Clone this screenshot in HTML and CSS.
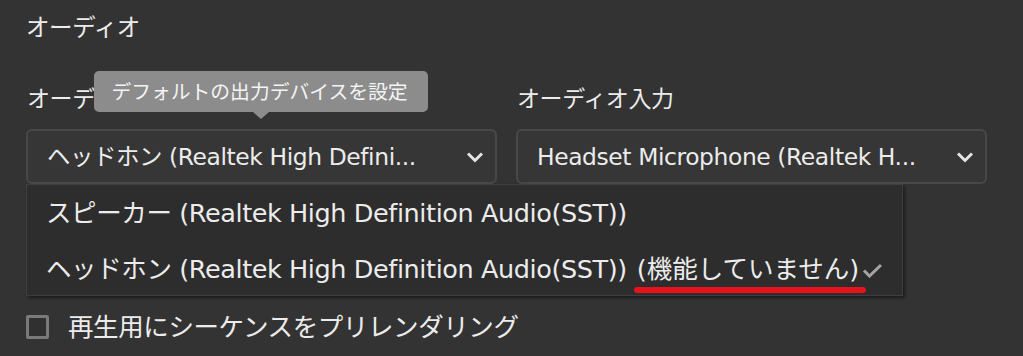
FILE: index.html
```html
<!DOCTYPE html>
<html lang="ja">
<head>
<meta charset="utf-8">
<link rel="stylesheet" href="styles.css">
</head>
<body>
<div class="page">
  <div class="title">オーディオ</div>
  <div class="row">
    <div class="field">
      <div class="label">オーディオ出力</div>
      <div class="select">
        <span class="value">ヘッドホン (Realtek High Defini...</span>
        <svg class="chev" width="18" height="12" viewBox="0 0 18 12"><path d="M2 2.5 L9 9.5 L16 2.5" fill="none" stroke="#e4e4e4" stroke-width="3"/></svg>
      </div>
      <div class="tooltip">デフォルトの出力デバイスを設定</div>
    </div>
    <div class="field">
      <div class="label">オーディオ入力</div>
      <div class="select">
        <span class="value">Headset Microphone (Realtek H...</span>
        <svg class="chev" width="18" height="12" viewBox="0 0 18 12"><path d="M2 2.5 L9 9.5 L16 2.5" fill="none" stroke="#e4e4e4" stroke-width="3"/></svg>
      </div>
    </div>
  </div>
  <div class="menu">
    <div class="item">スピーカー (Realtek High Definition Audio(SST))</div>
    <div class="item">ヘッドホン (Realtek High Definition Audio(SST)) <span class="mark">(機能していません)</span><svg class="check" width="21" height="15" viewBox="0 0 21 15"><path d="M2 7.5 L7.5 13 L19 2" fill="none" stroke="#a4a4a4" stroke-width="3"/></svg></div>
  </div>
  <label class="check-row">
    <span class="box"></span>
    <span class="check-label">再生用にシーケンスをプリレンダリング</span>
  </label>
</div>
</body>
</html>
```
FILE: styles.css
```css
html, body {
  margin: 0;
  padding: 0;
  background: #333333;
}
body {
  width: 1023px;
  height: 356px;
  overflow: hidden;
  font-family: "DejaVu Sans", "Noto Sans CJK JP", sans-serif;
  color: #ececec;
  font-size: 23px;
  letter-spacing: -0.4px;
}
.page {
  padding: 11px 0 0 26px;
}
.title {
  line-height: 34px;
  height: 34px;
  font-size: 23.5px;
}
.row {
  display: flex;
  gap: 19px;
  margin-top: 37px;
}
.field {
  position: relative;
  width: 471px;
}
.label {
  line-height: 34px;
  height: 34px;
  padding-left: 1px;
  margin-bottom: 13px;
}
.select {
  box-sizing: border-box;
  height: 55px;
  border: 2px solid #484848;
  border-radius: 6px;
  background: #363636;
  display: flex;
  align-items: center;
  padding: 0 11px 0 19px;
  font-size: 23.4px;
}
.value {
  flex: 1;
  white-space: nowrap;
  line-height: 34px;
}
.chev {
  display: block;
  margin-top: 1px;
}
.tooltip {
  position: absolute;
  left: 68px;
  top: -11px;
  width: 334px;
  height: 41px;
  background: #8c8c8c;
  border-radius: 5px;
  color: #f4f4f4;
  font-family: "Noto Sans CJK JP", sans-serif;
  font-size: 19.8px;
  letter-spacing: 0;
  line-height: 40px;
  text-align: center;
  padding-right: 3px;
  box-sizing: border-box;
}
.tooltip::after {
  content: "";
  position: absolute;
  left: 159px;
  bottom: -7px;
  border-left: 8px solid transparent;
  border-right: 8px solid transparent;
  border-top: 7px solid #8c8c8c;
}
.menu {
  box-sizing: border-box;
  width: 877px;
  height: 112px;
  background: #2d2d2d;
  border: 1px solid #3e3e3e;
  box-shadow: 2px 2px 3px rgba(0,0,0,0.45);
}
.item {
  height: 56px;
  line-height: 56px;
  padding-left: 19px;
  white-space: nowrap;
  display: flex;
  align-items: center;
  font-size: 25.5px;
}
.mark {
  position: relative;
  margin-left: 10px;
  letter-spacing: 0;
}
.mark::after {
  content: "";
  position: absolute;
  left: -3px;
  right: -7px;
  top: 46px;
  height: 6px;
  border-radius: 3px;
  background: #e8121c;
}
.check {
  margin: 3px 0 0 3px;
}
.check-row {
  display: flex;
  align-items: center;
  gap: 19px;
  margin-top: 16px;
}
.box {
  box-sizing: border-box;
  width: 23px;
  height: 24px;
  border: 3px solid #7a7a7a;
  border-radius: 2px;
  background: #303030;
}
.check-label {
  line-height: 30px;
  font-size: 25.5px;
}
```
